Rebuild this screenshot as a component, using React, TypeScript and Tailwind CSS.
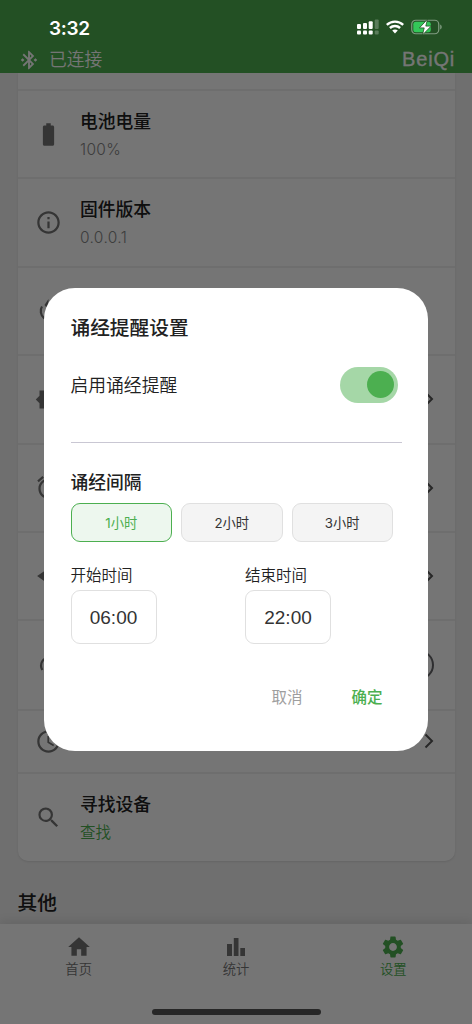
import React, { useState } from "react";
import {
  MdAlarm,
  MdBatteryStd,
  MdBluetoothConnected,
  MdHome,
  MdInfoOutline,
  MdSchedule,
  MdSearch,
  MdSettings,
} from "react-icons/md";

function RotateIcon() {
  return (
    <svg viewBox="0 0 26 26" className="size-[26px]" fill="none" stroke="currentColor" strokeWidth="2.2">
      <path d="M6 8.500C3.600 12 4.700 17.500 8 20c3 2.200 8 2.200 11-.5 3-3 3-8 .5-11" />
      <path d="M8.500 7l4-6v11z" fill="currentColor" stroke="none" />
    </svg>
  );
}

function BrightnessIcon() {
  return (
    <svg viewBox="0 0 24 24" className="size-[27px]" fill="currentColor">
      <path d="M20 15.310L23.310 12 20 8.690V4h-4.690L12 .69 8.690 4H4v4.690L.69 12 4 15.310V20h4.690L12 23.310 15.310 20H20z" />
    </svg>
  );
}

function SparkIcon() {
  return (
    <svg viewBox="0 0 24 24" className="size-[26px]" fill="currentColor">
      <path d="M12 1l4.500 6.500L23 12l-6.500 4.500L12 23l-4.500-6.500L1 12l6.500-4.500z" />
    </svg>
  );
}

function ArcIcon() {
  return (
    <svg viewBox="0 0 26 26" className="size-[26px]" fill="none" stroke="currentColor" strokeWidth="2.200">
      <path d="M6.300 18C3 12 7 5.500 13 5.500S23 12 19.700 18" />
    </svg>
  );
}

function Chevron() {
  return (
    <svg viewBox="0 0 10 16" className="h-4 w-2.5" fill="none" stroke="#565656" strokeWidth="2">
      <path d="M1.500 1.500L8 8l-6.500 6.500" />
    </svg>
  );
}

function ChartIcon() {
  return (
    <svg viewBox="0 0 20 20" className="size-5" fill="currentColor">
      <path d="M1 7h5v12H1zM7.800 1h4.700v18H7.800zM14.300 11H19v8h-4.700z" />
    </svg>
  );
}

type RowProps = {
  icon: React.ReactNode;
  title?: string;
  value?: string;
  green?: boolean;
  trailing?: React.ReactNode;
  size?: string;
  last?: boolean;
};

function Row({ icon, title, value, green, trailing, size = "h-[88.400px]", last }: RowProps) {
  return (
    <div className={`flex items-center justify-between pl-[17.500px] pr-[21px] ${size} ${last ? "" : "border-b-2 border-[#f0f0f0]"}`}>
      <div className="flex w-[27px] shrink-0 justify-center text-[#757575]">{icon}</div>
      {title && (
        <div className="ml-[18px] flex-1 pt-[2px]">
          <div className="text-[17.800px] leading-[26px] font-medium text-[#212121]">{title}</div>
          <div
            className={`mt-[3px] text-[15.500px] leading-[24px] ${green ? "font-[350] text-[#4caf50]" : "font-light tracking-[0.35px] text-[#858585]"}`}
          >
            {value}
          </div>
        </div>
      )}
      {trailing}
    </div>
  );
}

function StatusBar() {
  return (
    <div className="absolute inset-x-0 top-0 flex h-[54px] items-center justify-between pr-[30px] pl-[49px] text-white">
      <span className="pt-[2px] text-[19px] leading-none font-semibold tracking-[-0.3px]">3:32</span>
      <div className="flex items-center">
        <svg viewBox="0 0 22 16" className="h-4 w-[22px]" fill="white">
          <rect x="0" y="5" width="4" height="5" rx="1" />
          <rect x="6" y="4" width="4" height="6" rx="1" />
          <rect x="11.700" y="2.200" width="4" height="7.800" rx="1" />
          <rect x="17.700" y="0.500" width="4" height="9.500" rx="1" opacity=".25" />
          <rect x="0" y="11.500" width="4" height="4" rx="1" />
          <rect x="6" y="11.500" width="4" height="4" rx="1" />
          <rect x="11.700" y="11.500" width="4" height="4" rx="1" />
          <rect x="17.700" y="11.500" width="4" height="4" rx="1" opacity=".25" />
        </svg>
        <svg viewBox="0 0 18 14" className="ml-[7px] h-3.5 w-[18px]" fill="none" stroke="white" strokeWidth="2.400">
          <path d="M.8 4.800C5.300.5 12.700.5 17.200 4.800" />
          <path d="M3.900 8c2.900-2.700 7.300-2.700 10.200 0" />
          <path d="M6.200 10.600c1.600-1.500 4-1.500 5.600 0L9 13.600z" fill="white" stroke="none" />
        </svg>
        <svg viewBox="0 0 31 16" className="ml-[7px] h-4 w-[31px]">
          <rect x=".75" y="1.250" width="27" height="13.500" rx="4" fill="none" stroke="#809c81" strokeWidth="1.200" />
          <path d="M29.200 5.500c2 1 2 4 0 5z" fill="#809c81" />
          <rect x="2.300" y="2.800" width="17.500" height="10.400" rx="2.500" fill="#34c759" />
          <path d="M16.500.2L8.400 8.900h4.800l-1.700 7 8.700-8.800h-5.400z" fill="white" stroke="#245024" strokeWidth=".8" />
        </svg>
      </div>
    </div>
  );
}

function ReminderDialog() {
  const [hours, setHours] = useState(1);
  const [enabled, setEnabled] = useState(true);
  return (
    <div role="dialog" className="mt-[14px] flex h-[463px] w-[384px] flex-col rounded-[31px] bg-white px-[26.500px] text-[#212121]">
      <h2 className="mt-[26px] text-[19.700px] leading-[28px] font-medium">诵经提醒设置</h2>
      <div className="mt-[25px] flex h-[36px] items-center justify-between pr-[4px]">
        <span className="pt-[3px] text-[17.800px] font-[350]">启用诵经提醒</span>
        <button
          role="switch"
          aria-checked={enabled}
          onClick={() => setEnabled(!enabled)}
          className={`flex h-[36px] w-[57.500px] items-center rounded-full px-[4px] ${enabled ? "justify-end bg-[#a5d7a7]" : "bg-gray-300"}`}
        >
          <span className="size-[27px] rounded-full bg-[#4caf50]" />
        </button>
      </div>
      <div className="mt-[39px] h-px w-[331px] shrink-0 bg-[#c9c7d3]" />
      <h3 className="mt-[27px] text-[17.800px] leading-[26px] font-medium">诵经间隔</h3>
      <div className="mt-[7px] flex gap-[9px]">
        {[1, 2, 3].map((n) => (
          <button
            key={n}
            onClick={() => setHours(n)}
            className={`h-[39px] w-[101.500px] shrink-0 rounded-[9px] border pt-[3px] text-[13.300px] ${
              hours === n ? "border-[#4caf50] bg-[#edf7ee] text-[#4caf50]" : "border-[#e0e0e0] bg-[#f4f4f4] text-[#333]"
            }`}
          >
            {n}小时
          </button>
        ))}
      </div>
      <div className="mt-[22px] flex">
        <TimeField label="开始时间" time="06:00" />
        <TimeField label="结束时间" time="22:00" />
      </div>
      <div className="mt-[42px] flex justify-end gap-[49px] pr-[19px] text-[15.500px] leading-[24px]">
        <button className="text-[#9e9e9e]">取消</button>
        <button className="font-medium text-[#4caf50]">确定</button>
      </div>
    </div>
  );
}

function TimeField({ label, time }: { label: string; time: string }) {
  return (
    <div className="w-[174.500px] shrink-0">
      <div className="text-[15.500px] leading-[24px] font-[350]">{label}</div>
      <div className="mt-[2px] flex h-[54px] w-[86px] items-center justify-center rounded-[9px] border border-[#e0e0e0] pt-[3px] font-['Liberation_Sans'] text-[19px] text-[#333]">
        {time}
      </div>
    </div>
  );
}

function NavItem({ icon, label, active }: { icon: React.ReactNode; label: string; active?: boolean }) {
  return (
    <div className={`flex flex-1 flex-col items-center ${active ? "text-[#4caf50]" : "text-[#757575]"}`}>
      <div className="mt-[9px] flex h-[27px] items-center">{icon}</div>
      <span className="text-[13.300px] leading-[18px] font-[350]">{label}</span>
    </div>
  );
}

export default function App() {
  return (
    <div className="relative flex h-[1024px] w-[472px] flex-col overflow-hidden bg-[#f1f1f1] font-['Inter','Noto_Sans_CJK_SC',sans-serif]">
      <header className="z-10 flex h-[73px] shrink-0 items-end justify-between bg-[#4caf50] pr-[17px] pb-[2px] pl-[18px] text-white">
        <div className="flex items-center">
          <MdBluetoothConnected className="size-[22px]" />
          <span className="ml-[9px] text-[17.800px] leading-[23px] font-[350]">已连接</span>
        </div>
        <span className="font-['Liberation_Sans'] text-[20px] leading-[24px] tracking-[0.8px] [-webkit-text-stroke:0.3px_white]">BeiQi</span>
      </header>
      <main className="min-h-0 flex-1 overflow-hidden px-[17.500px]">
        <div className="h-[788px] rounded-b-[10px] bg-white shadow-[0_1px_2px_rgba(0,0,0,0.09)]">
          <div className="h-[18px] border-b-2 border-[#f0f0f0]" />
          <Row icon={<MdBatteryStd size={27} />} title="电池电量" value="100%" />
          <Row icon={<MdInfoOutline size={27} />} title="固件版本" value="0.0.0.1" />
          <Row icon={<RotateIcon />} />
          <Row icon={<BrightnessIcon />} trailing={<Chevron />} />
          <Row icon={<MdAlarm size={27} />} trailing={<Chevron />} />
          <Row icon={<SparkIcon />} trailing={<Chevron />} />
          <Row
            icon={<ArcIcon />}
            size="h-[89.400px]"
            trailing={<div className="size-[30px] rounded-full border-2 border-[#656569]" />}
          />
          <Row icon={<MdSchedule size={27} />} size="h-[63px]" trailing={<Chevron />} />
          <Row icon={<MdSearch size={27} />} title="寻找设备" value="查找" green last />
        </div>
        <h2 className="mt-[28px] text-[19.700px] leading-[28px] font-medium text-[#212121]">其他</h2>
      </main>
      <nav className="z-10 flex h-[100px] shrink-0 bg-white shadow-[0_-2px_10px_rgba(0,0,0,0.10)]">
        <NavItem icon={<MdHome size={26} />} label="首页" />
        <NavItem icon={<ChartIcon />} label="统计" />
        <NavItem icon={<MdSettings size={26} />} label="设置" active />
      </nav>
      <div className="absolute inset-0 z-20 flex items-center justify-center bg-black/54">
        <ReminderDialog />
      </div>
      <div className="pointer-events-none absolute inset-0 z-30">
        <StatusBar />
        <div className="absolute bottom-[9px] left-[152px] h-[6px] w-[169px] rounded-full bg-[#272727]" />
      </div>
    </div>
  );
}
